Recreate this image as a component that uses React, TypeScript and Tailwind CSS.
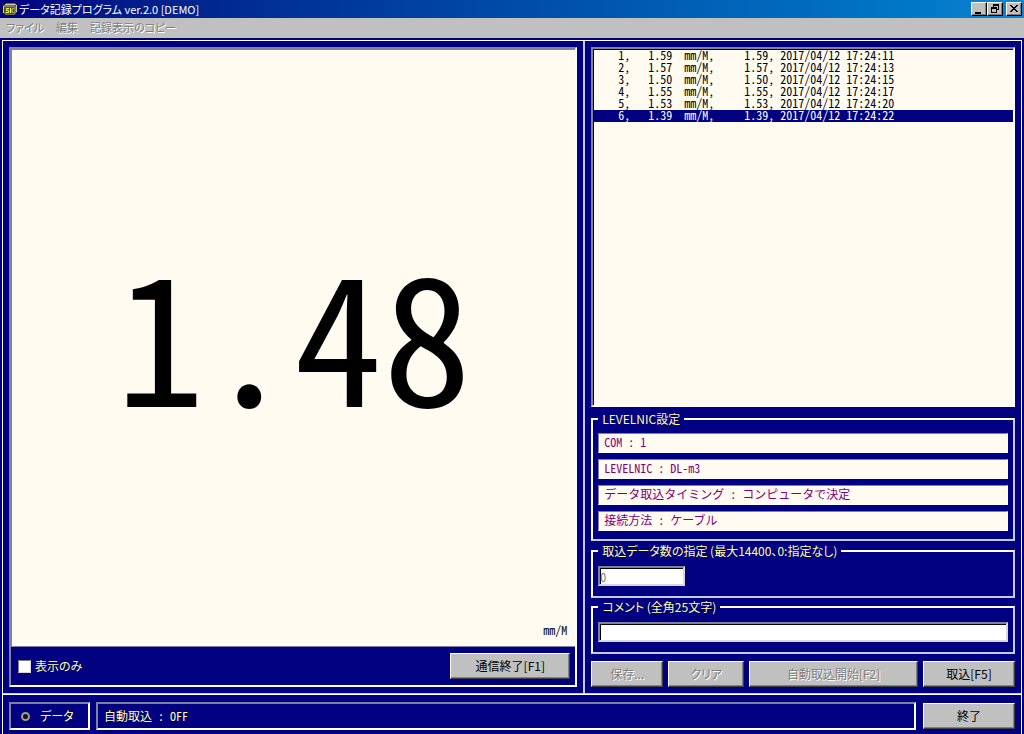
import type { ReactNode } from "react";

const RECORDS = [
  { no: 1, value: "1.59", date: "2017/04/12", time: "17:24:11" },
  { no: 2, value: "1.57", date: "2017/04/12", time: "17:24:13" },
  { no: 3, value: "1.50", date: "2017/04/12", time: "17:24:15" },
  { no: 4, value: "1.55", date: "2017/04/12", time: "17:24:17" },
  { no: 5, value: "1.53", date: "2017/04/12", time: "17:24:20" },
  { no: 6, value: "1.39", date: "2017/04/12", time: "17:24:22" },
];

const SETTINGS = [
  "COM : 1",
  "LEVELNIC : DL-m3",
  "データ取込タイミング : コンピュータで決定",
  "接続方法 : ケーブル",
];

const MENUS = ["ファイル", "編集", "記録表示のコピー"];

function AppIcon() {
  return (
    <svg viewBox="0 0 16 16" className="size-4" aria-hidden="true">
      <path d="M4 2h9l2.500 2.500v6L13 14H3L.5 11.500V5z" fill="#c8c8a8" stroke="#111" />
      <path d="M2 5h11l2-2M13 5v8" fill="none" stroke="#333" />
      <rect x="2" y="6" width="10" height="7" fill="#5a5a10" />
      <path
        d="M7 7.500H4.500v2h2v2H3.500M8.500 7v5M11.500 7L9 9.500l2.500 2.500"
        fill="none"
        stroke="#f4f46a"
      />
    </svg>
  );
}

function WindowButton({ label, children }: { label: string; children: ReactNode }) {
  return (
    <button
      type="button"
      aria-label={label}
      className="h-[14px] w-4 border border-t-white border-l-white border-r-black border-b-black bg-[#c0c0c0] shadow-[inset_-1px_-1px_0_#808080]"
    >
      <svg viewBox="0 0 14 12" className="block h-3 w-[14px]" shapeRendering="crispEdges">
        {children}
      </svg>
    </button>
  );
}

function PushButton({
  children,
  className,
  disabled,
}: {
  children: ReactNode;
  className: string;
  disabled?: boolean;
}) {
  return (
    <button
      type="button"
      disabled={disabled}
      className={`h-[26px] border border-t-white border-l-white border-r-[#404040] border-b-[#404040] bg-[#c0c0c0] text-black shadow-[inset_-1px_-1px_0_#808080] disabled:text-[#808080] disabled:[text-shadow:1px_1px_0_#fff] ${className}`}
    >
      {children}
    </button>
  );
}

function Group({ title, className, children }: { title: string; className: string; children: ReactNode }) {
  return (
    <fieldset className={`min-w-0 border-2 border-t-white border-l-white border-r-[#c8c8e0] border-b-[#c8c8e0] px-[5px] ${className}`}>
      <legend className="px-1 leading-3 text-[#ffff99]">{title}</legend>
      {children}
    </fieldset>
  );
}

export default function App() {
  return (
    <div className="flex min-h-screen flex-col bg-[#000080] font-['Noto_Sans_CJK_JP',sans-serif] text-[12px] leading-4 text-[#ffff99] [font-feature-settings:'palt']">
      <header className="flex h-[18px] items-center bg-linear-to-r from-[#000080] to-[#1084d0] pr-[2px] pl-[2px] text-white">
        <AppIcon />
        <h1 className="ml-px flex-1 text-[11px]">データ記録プログラム ver.2.0 [DEMO]</h1>
        <WindowButton label="最小化">
          <path d="M3 9h6v2H3z" />
        </WindowButton>
        <WindowButton label="元に戻す">
          <path d="M5 1h6v6H9V6h1V3H6v1H5zM3 4h6v6H3zM4 6v3h4V6z" fillRule="evenodd" />
        </WindowButton>
        <div className="ml-[3px] flex">
          <WindowButton label="閉じる">
            <path d="M3 2h2v1h1v1h2V3h1V2h2v1h-1v1H9v1H8v1h1v1h1v1h1v1H9V8H8V7H6v1H5v1H3V8h1V7h1V6h1V5H5V4H4V3H3z" />
          </WindowButton>
        </div>
      </header>

      <nav className="flex h-5 items-center gap-3 bg-[#c0c0c0] px-[6px] pb-[2px] text-[11px]">
        {MENUS.map((menu) => (
          <button
            key={menu}
            type="button"
            disabled
            className="text-[#808080] [text-shadow:1px_1px_0_#fff]"
          >
            {menu}
          </button>
        ))}
      </nav>

      <main className="mt-[2px] mr-[2px] ml-[2px] flex flex-1 border border-white border-b-[#c8c8e0]">
        <section className="flex w-[57.2%] flex-col border-r-2 border-r-[#c8c8e0] p-[6px]">
          <div className="flex flex-1 flex-col border-2 border-t-[#8080a0] border-l-[#8080a0] border-r-white border-b-white">
            <div className="relative flex flex-1 items-center justify-center border-t border-b border-l border-[#8080a0] bg-[#fffbf0] pb-9 text-black [font-feature-settings:'hwid']">
              <output className="text-[178px] leading-none">1.48</output>
              <span className="absolute right-2 bottom-2">mm/M</span>
            </div>
            <div className="flex h-[38px] items-center justify-between pr-[5px] pl-[7px]">
              <label className="flex items-center gap-1">
                <input
                  type="checkbox"
                  className="size-[13px] appearance-none border border-t-[#808080] border-l-[#808080] border-r-[#d8d8d8] border-b-[#d8d8d8] bg-white"
                />
                表示のみ
              </label>
              <PushButton className="w-[120px]">通信終了[F1]</PushButton>
            </div>
          </div>
        </section>

        <section className="flex flex-1 flex-col p-[6px]">
          <ul
            role="listbox"
            aria-label="記録"
            className="flex-1 border-2 border-t-[#8080a0] border-l-[#8080a0] border-r-white border-b-white bg-[#fffbf0] pt-px pl-px text-black shadow-[inset_1px_1px_0_#000] [font-feature-settings:'hwid']"
          >
            {RECORDS.map((r) => (
              <li
                key={r.no}
                role="option"
                aria-selected={r.no === 6}
                className="h-3 leading-[10px] whitespace-pre aria-selected:bg-[#000080] aria-selected:text-white"
              >
                {`    ${r.no},   ${r.value}  mm/M,     ${r.value}, ${r.date} ${r.time}`}
              </li>
            ))}
          </ul>

          <Group title="LEVELNIC設定" className="mt-[6px] pt-2 pb-2">
            <div className="flex flex-col gap-[6px] [font-feature-settings:'hwid']">
              {SETTINGS.map((s) => (
                <p
                  key={s}
                  className="h-5 border border-t-[#8080a0] border-l-[#8080a0] border-r-white border-b-white bg-[#fffbf0] px-[5px] leading-4 text-[#800080]"
                >
                  {s}
                </p>
              ))}
            </div>
          </Group>

          <Group title="取込データ数の指定 (最大14400、0:指定なし)" className="mt-1 pt-[9px] pb-[10px]">
            <input
              type="text"
              aria-label="取込データ数の指定"
              defaultValue="0"
              disabled
              className="block h-5 w-[87px] border-2 border-t-[#8080a0] border-l-[#8080a0] border-r-[#d8d8d8] border-b-[#d8d8d8] bg-white text-[#808080] shadow-[inset_1px_1px_0_#000] [font-feature-settings:'hwid']"
            />
          </Group>

          <Group title="コメント (全角25文字)" className="mt-[3px] pt-[9px] pb-[10px]">
            <input
              type="text"
              aria-label="コメント"
              className="block h-5 w-full border-2 border-t-[#8080a0] border-l-[#8080a0] border-r-[#d8d8d8] border-b-[#d8d8d8] bg-white text-black shadow-[inset_1px_1px_0_#000]"
            />
          </Group>

          <div className="mt-[7px] flex gap-[5px]">
            <PushButton className="w-[72px]" disabled>保存...</PushButton>
            <PushButton className="w-[76px]" disabled>クリア</PushButton>
            <PushButton className="flex-1" disabled>自動取込開始[F2]</PushButton>
            <PushButton className="w-[92px]">取込[F5]</PushButton>
          </div>
        </section>
      </main>

      <footer className="mr-[2px] ml-[2px] flex items-center border-x border-t border-white pt-[7px] pr-[6px] pb-1 pl-[6px]">
        <div className="flex h-7 w-[81px] items-center border-2 border-t-[#8080a0] border-l-[#8080a0] border-r-white border-b-white pl-[10px]">
          <span className="mr-[10px] size-[9px] rounded-full border-2 border-[#a0a080] bg-[#101020]" />
          データ
        </div>
        <div
          role="status"
          className="ml-[6px] flex h-7 flex-1 items-center border-2 border-t-[#8080a0] border-l-[#8080a0] border-r-white border-b-white pl-[6px] [font-feature-settings:'hwid']"
        >
          自動取込 : OFF
        </div>
        <PushButton className="ml-[7px] w-[92px]">終了</PushButton>
      </footer>
    </div>
  );
}
